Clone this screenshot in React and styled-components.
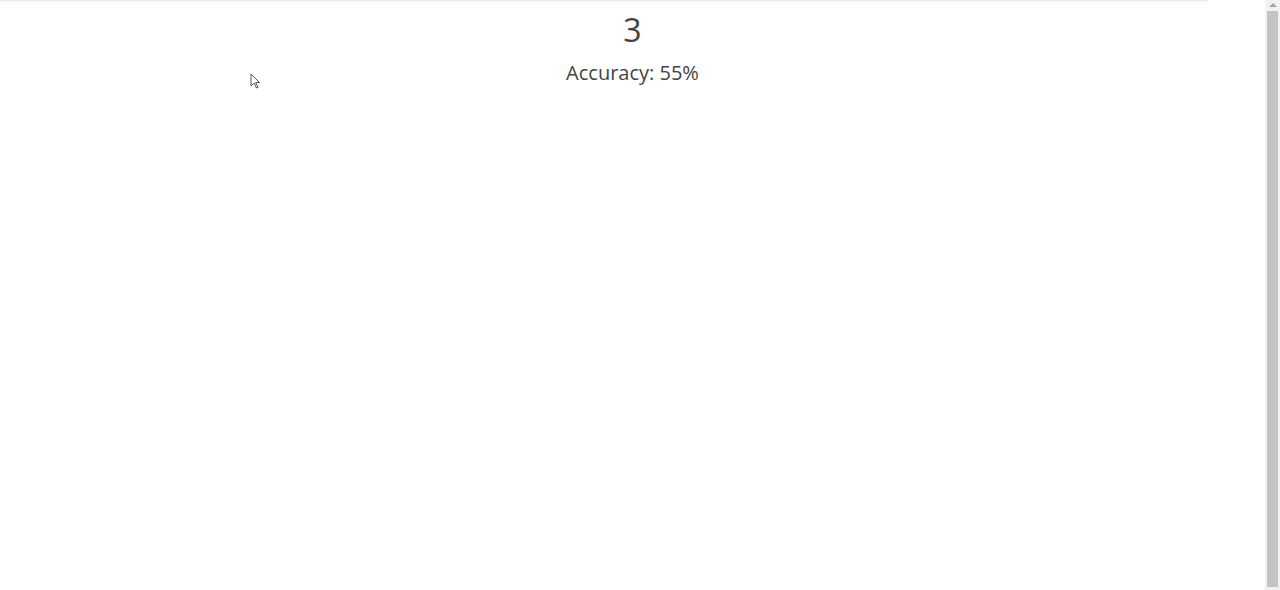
import styled, { createGlobalStyle } from "styled-components";

const Global = createGlobalStyle`
  html, body {
    margin: 0;
    padding: 0;
    background: #fff;
    overflow: hidden;
  }
  body {
    font-family: "Open Sans", "Noto Sans", sans-serif;
    color: #444;
  }
`;

const Window = styled.div`
  display: flex;
  height: 590px;
  position: relative;
`;

const Page = styled.div`
  flex: 1;
  min-width: 0;
`;

const TopShade = styled.div`
  width: 1208px;
  height: 3px;
  background: linear-gradient(#e4e4e4, #fafafa 60%, #fff);
`;

const Board = styled.main`
  display: flex;
  flex-direction: column;
  align-items: center;
  padding-top: 8px;
`;

const Count = styled.div`
  font-size: 32px;
  line-height: 38px;
  color: #444;
`;

const Score = styled.div`
  margin-top: 11px;
  font-size: 20px;
  line-height: 26px;
  color: #444;
`;

const Scrollbar = styled.div`
  width: 15px;
  background: #f1f1f1;
  display: flex;
  flex-direction: column;
  align-items: center;
  padding: 3px 0 3px;
  box-sizing: border-box;
`;

const Arrow = styled.div`
  width: 0;
  height: 0;
  border-left: 4px solid transparent;
  border-right: 4px solid transparent;
  border-bottom: 4px solid #a3a3a3;
  margin-bottom: 4px;
`;

const Thumb = styled.div`
  flex: 1;
  width: 11px;
  background: #c4c4c4;
`;

const Cursor = styled.svg`
  position: absolute;
  left: 250px;
  top: 73px;
`;

export default function App() {
  return (
    <Window>
      <Global />
      <Page>
        <TopShade />
        <Board>
          <Count>3</Count>
          <Score>Accuracy: 55%</Score>
        </Board>
      </Page>
      <Scrollbar>
        <Arrow />
        <Thumb />
      </Scrollbar>
      <Cursor width="12" height="18" viewBox="0 0 12 18">
        <path d="M1 1 L1 13 L4 10 L6.5 15 L8 14.3 L5.6 9.5 L9.5 9.5 Z" fill="#fff" stroke="#555" strokeWidth="1" strokeLinejoin="round" />
      </Cursor>
    </Window>
  );
}
